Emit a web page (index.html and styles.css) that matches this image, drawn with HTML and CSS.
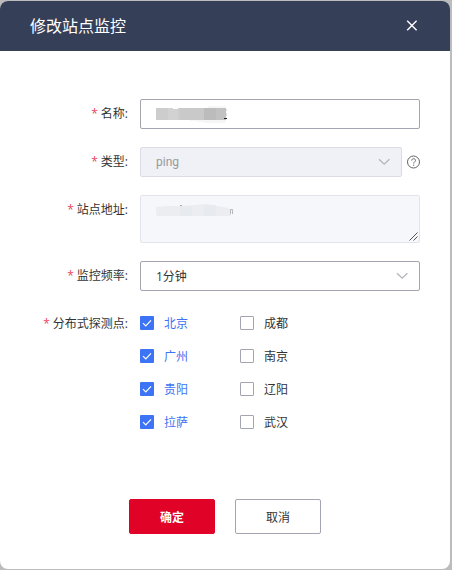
FILE: index.html
```html
<!DOCTYPE html>
<html lang="zh-CN">

<head>
    <meta charset="UTF-8">
    <meta name="viewport" content="width=device-width, initial-scale=1.0">
    <title>修改站点监控</title>
    <link rel="stylesheet" href="styles.css">
</head>

<body>
    <div class="dialog">
        <div class="dialog-header">
            <h2>修改站点监控</h2>
            <svg class="close" width="12" height="12" viewBox="0 0 12 12">
                <path d="M1.200 .8l9.400 9.400M10.600 .8l-9.400 9.400" />
            </svg>
        </div>

        <form class="form">
            <div class="row">
                <label class="label"><i>*</i>名称:</label>
                <div class="field">
                    <svg class="mask" width="72" height="18" viewBox="0 0 72 18" shape-rendering="crispEdges">
                        <path fill="#f6f6f6" d="M16 14h54v4H51l-14-2-21-3zM52 1h18v2H52z" />
                        <path fill="#cdcdcd" d="M0 3h17v1h5V3h2v12H0z" />
                        <path fill="#d2d2d2" d="M12 3h5v1h5v11H12z" />
                        <path fill="#c9c9c9" d="M24 3h24v12H24z" />
                        <path fill="#bcbcbc" d="M48 3h12v12H48z" />
                        <path fill="#c2c2c2" d="M60 3h10v12H60z" />
                        <path fill="#ddd" d="M70 4h1v2h-1zM70 8h1v3h-1z" />
                        <path fill="#222" d="M68 13h3v1h-3z" />
                    </svg>
                </div>
            </div>

            <div class="row">
                <label class="label"><i>*</i>类型:</label>
                <div class="field field-short disabled">
                    <span>ping</span>
                    <svg class="arrow" width="12" height="8" viewBox="0 0 12 8">
                        <path d="M1 1.200l5.200 5L11.400 1.200" />
                    </svg>
                </div>
                <svg class="help" width="14" height="14" viewBox="0 0 14 14">
                    <circle cx="6.500" cy="7" r="6" />
                    <path d="M4.700 5.600c0-1.200.8-1.900 1.900-1.900s1.900.7 1.900 1.700c0 1.400-1.800 1.500-1.800 3.100M6.700 9.600v1.200" />
                </svg>
            </div>

            <div class="row row-area">
                <label class="label"><i>*</i>站点地址:</label>
                <div class="field area">
                    <svg class="mask" width="78" height="14" viewBox="0 0 78 14">
                        <path fill="#ebedf0" d="M0 3l12-1h12l14-1 13-1 10 2 11 2 3 2v6H1l-1-2z" />
                        <path fill="#e7eaee" d="M24 2h12v10H24zM48 1h12v11H48z" />
                        <path fill="#aaa" d="M24 1h2v1h-2z" />
                        <path stroke="#b5b7bc" d="M74.500 10V5.500h2V10" />
                    </svg>
                    <svg class="grip" width="9" height="9" viewBox="0 0 9 9">
                        <path d="M.5 8.500l8-8M4.500 8.500l4-4" />
                    </svg>
                </div>
            </div>

            <div class="row">
                <label class="label"><i>*</i>监控频率:</label>
                <div class="field">
                    <span>1分钟</span>
                    <svg class="arrow" width="12" height="8" viewBox="0 0 12 8">
                        <path d="M1 1.200l5.200 5L11.400 1.200" />
                    </svg>
                </div>
            </div>

            <div class="row row-checks">
                <label class="label"><i>*</i>分布式探测点:</label>
                <div class="checks">
                    <div class="check checked"><span class="box"><svg width="14" height="14" viewBox="0 0 14 14"><path d="M3 7.100l2.800 2.800L11 4.400" /></svg></span>北京</div>
                    <div class="check"><span class="box"></span>成都</div>
                    <div class="check checked"><span class="box"><svg width="14" height="14" viewBox="0 0 14 14"><path d="M3 7.100l2.800 2.800L11 4.400" /></svg></span>广州</div>
                    <div class="check"><span class="box"></span>南京</div>
                    <div class="check checked"><span class="box"><svg width="14" height="14" viewBox="0 0 14 14"><path d="M3 7.100l2.800 2.800L11 4.400" /></svg></span>贵阳</div>
                    <div class="check"><span class="box"></span>辽阳</div>
                    <div class="check checked"><span class="box"><svg width="14" height="14" viewBox="0 0 14 14"><path d="M3 7.100l2.800 2.800L11 4.400" /></svg></span>拉萨</div>
                    <div class="check"><span class="box"></span>武汉</div>
                </div>
            </div>
        </form>

        <div class="buttons">
            <button class="btn btn-primary">确定</button>
            <button class="btn">取消</button>
        </div>
    </div>
</body>

</html>
```

FILE: styles.css
```css
* {
    margin: 0;
    padding: 0;
    box-sizing: border-box;
}

body {
    width: 452px;
    height: 570px;
    padding: 1px 2px 1px 0;
    overflow: hidden;
    background-color: #bcbcbc;
    font-family: "Open Sans", "Noto Sans CJK SC", sans-serif;
    font-size: 12px;
    color: #333;
}

svg {
    display: block;
    flex: none;
    fill: none;
}

.dialog {
    height: 568px;
    background-color: #fff;
    border-radius: 8px;
    overflow: hidden;
}

.dialog-header {
    display: flex;
    justify-content: space-between;
    align-items: center;
    height: 50px;
    padding: 0 32px 0 30px;
    background-color: #363f58;
    color: #fff;
}

.dialog-header h2 {
    font-size: 16px;
    font-weight: normal;
    line-height: 24px;
}

.close {
    stroke: #fff;
    stroke-width: 1.4;
}

.form {
    display: flex;
    flex-direction: column;
    gap: 18px;
    padding-top: 48px;
}

.row {
    display: flex;
    align-items: center;
    height: 30px;
}

.label {
    width: 140px;
    padding-right: 12px;
    line-height: 30px;
    text-align: right;
    white-space: nowrap;
}

.label i {
    margin-right: 3px;
    font-style: normal;
    color: #e8475f;
}

.field {
    display: flex;
    align-items: center;
    justify-content: space-between;
    width: 280px;
    height: 30px;
    padding: 0 11px 0 15px;
    border: 1px solid #a3a6b0;
    border-radius: 2px;
    background-color: #fff;
}

.field-short {
    width: 262px;
}

.disabled {
    background-color: #f0f1f6;
    border-color: #dadbe3;
    font-family: Roboto, sans-serif;
    color: #999;
}

.arrow {
    stroke: #b3b5bb;
    stroke-width: 1.3;
}

.help {
    margin-left: 5px;
    stroke: #666;
    stroke-width: 1;
}

.row-area {
    align-items: flex-start;
    height: 48px;
}

.area {
    position: relative;
    align-items: flex-start;
    height: 48px;
    padding-top: 8px;
    background-color: #f5f7fb;
    border-color: #e1e4ea;
}

.grip {
    position: absolute;
    right: 1px;
    bottom: 1px;
    stroke: #555;
    stroke-width: 1;
}

.row-checks {
    align-items: flex-start;
    height: auto;
}

.checks {
    display: grid;
    grid-template-columns: 100px 100px;
    grid-auto-rows: 33px;
    margin-top: -3px;
}

.check {
    display: flex;
    align-items: center;
    gap: 10px;
}

.box {
    width: 14px;
    height: 14px;
    border: 1px solid #a3a6b0;
    border-radius: 1px;
}

.checked {
    color: #3d73f5;
}

.checked .box {
    border: none;
    background-color: #3d73f5;
}

.box svg {
    stroke: #fff;
    stroke-width: 1.2;
}

.buttons {
    display: flex;
    justify-content: center;
    gap: 20px;
    margin-top: 61px;
}

.btn {
    width: 86px;
    height: 35px;
    border: 1px solid #a3a6b0;
    border-radius: 2px;
    background-color: #fff;
    font-family: inherit;
    font-size: 12px;
    color: #333;
}

.btn-primary {
    border-color: #e10327;
    background-color: #e10327;
    color: #fff;
    font-weight: bold;
}
```
